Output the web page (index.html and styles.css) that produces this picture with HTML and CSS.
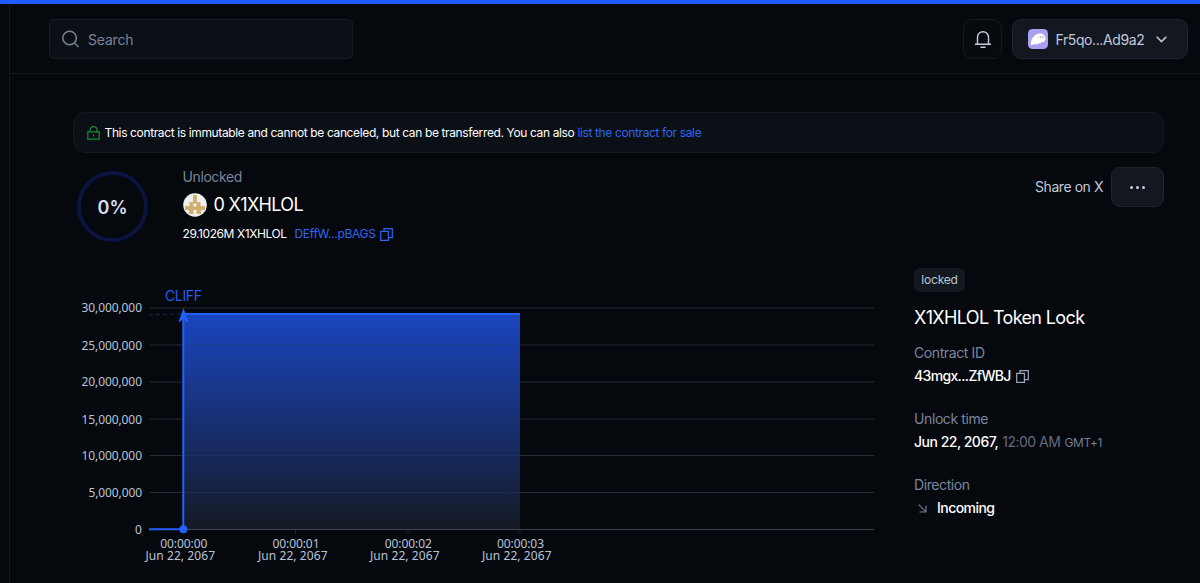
FILE: index.html
```html
<!DOCTYPE html>
<html lang="en">
<head>
<meta charset="utf-8">
<title>X1XHLOL Token Lock</title>
<link rel="stylesheet" href="styles.css">
</head>
<body>
<div class="accent-bar"></div>
<div class="shell">
  <aside class="rail"></aside>
  <div class="page">
    <header class="header">
      <div class="search">
        <svg width="18" height="18" viewBox="0 0 18 18" fill="none" stroke="#7b8292" stroke-width="1.5"><circle cx="7.600" cy="8" r="6.800"/><path d="M12.500 13l4 4"/></svg>
        <span>Search</span>
      </div>
      <div class="header-actions">
        <button class="icon-button" aria-label="Notifications">
          <svg width="18" height="20" viewBox="0 0 18 20" fill="none" stroke="#c3ccdc" stroke-width="1.4"><path d="M3.500 15V8.200a5.500 5.500 0 0 1 11 0V15M1 15.200h16M6.500 18.300h5"/></svg>
        </button>
        <button class="wallet">
          <svg width="20" height="20" viewBox="0 0 20 20"><rect width="20" height="20" rx="4.500" fill="#ab9ff2"/><path d="M2.700 14.400C3.300 9 7 4.500 12 4.500c3.400 0 5.500 2.100 5.500 4.900 0 2.700-1.900 4.300-3.800 3.600-.8 1.700-2.500 2.100-3.400 1-1.200 1.700-3 2-3.900.8-1.100 1.600-3.900 1.700-3.700-.4Z" fill="#fff"/><ellipse cx="12.300" cy="8" rx=".7" ry="1.100" fill="#ab9ff2"/><ellipse cx="15" cy="8" rx=".7" ry="1.100" fill="#ab9ff2"/></svg>
          <span>Fr5qo...Ad9a2</span>
          <svg class="chevron" width="11" height="7" viewBox="0 0 11 7" fill="none" stroke="#c3ccdc" stroke-width="1.500"><path d="M.7.8l4.800 4.800L10.300.8"/></svg>
        </button>
      </div>
    </header>
    <main class="main">
      <div class="notice">
        <svg width="13" height="14" viewBox="0 0 13 14" fill="none" stroke="#129136" stroke-width="1.200"><path d="M.8 5.800h11.400v7.400H.8zM3 5.800V4.200a3.500 3.500 0 0 1 7 0v1.600M6.500 8.500v2"/></svg>
        <p><span>This contract is immutable and cannot be canceled, but can be transferred. You can also</span> <a class="link">list the contract for sale</a></p>
      </div>
      <section class="summary">
        <div class="ring"><span>0%</span></div>
        <div class="amounts">
          <div class="label">Unlocked</div>
          <div class="token">
            <svg width="24" height="24" viewBox="0 0 24 24"><circle cx="12" cy="12" r="11.800" fill="#efefef"/><path d="M10 2h4v7h3.500v4H22v4h-4v4h-4.500v-4h-3v4H6v-4H2v-4h4.500V9H10zM10.500 10.500v3h3v-3z" fill="#d1b172" fill-rule="evenodd"/></svg>
            <span>0 X1XHLOL</span>
          </div>
          <div class="total">
            <span class="total-value">29.1026M X1XHLOL</span>
            <a class="link mint">DEffW...pBAGS</a>
            <svg width="13" height="13" viewBox="0 0 13 13" fill="none" stroke="#2f66f0" stroke-width="1.200"><path d="M.7 3.300h7.700v9H.7zM4 3V.7h8.300v9H8.700"/></svg>
          </div>
        </div>
        <div class="actions">
          <span class="share">Share on X</span>
          <button class="more" aria-label="More"><i></i><i></i><i></i></button>
        </div>
      </section>
      <section class="content">
        <svg class="chart" width="810" height="305" viewBox="73 265 810 305">
          <defs>
            <linearGradient id="area" x1="0" y1="0" x2="0" y2="1"><stop offset="0" stop-color="#1a45c0"/><stop offset="1" stop-color="#151a24"/></linearGradient>
          </defs>
          <g class="grid">
            <path d="M150 308H874M150 345H874M150 382H874M150 419H874M150 455.500H874M150 492.500H874"/>
          </g>
          <rect x="183" y="314" width="337" height="215.500" fill="url(#area)"/>
          <path class="grid-over" d="M183 345H520M183 382H520M183 419H520M183 455.500H520M183 492.500H520"/>
          <path class="axis" d="M150 529.500H874"/>
          <path class="ticks" d="M295.500 530v4M408 530v4M520 530v4"/>
          <path class="guide" d="M149 315L183 314"/>
          <path class="series" d="M149 529.200H183.300V314H520"/>
          <circle cx="183.300" cy="529.300" r="4" fill="#2460ff"/>
          <path d="M183.500 308l5.200 14.500-5.200-3.300-5.200 3.300z" fill="#2460ff"/>
          <text class="cliff" x="165" y="301.300" textLength="37">CLIFF</text>
          <g class="y-labels">
            <text x="81.500" y="312.300" textLength="60.500">30,000,000</text>
            <text x="81.500" y="349.500" textLength="60.500">25,000,000</text>
            <text x="81.500" y="386.300" textLength="60.500">20,000,000</text>
            <text x="81.500" y="423.500" textLength="60.500">15,000,000</text>
            <text x="81.500" y="460.300" textLength="60.500">10,000,000</text>
            <text x="88.500" y="497.300" textLength="53.500">5,000,000</text>
            <text x="135" y="534">0</text>
          </g>
          <g class="x-labels">
            <text x="160.300" y="548.300" textLength="47">00:00:00</text><text x="145.500" y="560" textLength="69.500">Jun 22, 2067</text>
            <text x="272.500" y="548.300" textLength="47">00:00:01</text><text x="258" y="560" textLength="69.500">Jun 22, 2067</text>
            <text x="384.800" y="548.300" textLength="47">00:00:02</text><text x="370" y="560" textLength="69.500">Jun 22, 2067</text>
            <text x="497" y="548.300" textLength="47">00:00:03</text><text x="482" y="560" textLength="69.500">Jun 22, 2067</text>
          </g>
        </svg>
        <aside class="details">
          <span class="tag">locked</span>
          <h1 class="title">X1XHLOL Token Lock</h1>
          <div class="field">
            <div class="label">Contract ID</div>
            <div class="value"><span class="contract-id">43mgx...ZfWBJ</span>
              <svg class="copy" width="13" height="13" viewBox="0 0 13 13" fill="none" stroke="#9ea7ba" stroke-width="1.200"><path d="M.7 3.300h7.700v9H.7zM4 3V.7h8.300v9H8.700"/></svg>
            </div>
          </div>
          <div class="field">
            <div class="label">Unlock time</div>
            <div class="value"><span class="date">Jun 22, 2067,</span><span class="time">12:00 AM</span><span class="zone">GMT+1</span></div>
          </div>
          <div class="field">
            <div class="label">Direction</div>
            <div class="value direction">
              <svg width="9" height="9" viewBox="0 0 9 9" fill="none" stroke="#70798b" stroke-width="1.200"><path d="M.7.7l7 7M8 1.500V8H1.500"/></svg>
              <span>Incoming</span>
            </div>
          </div>
        </aside>
      </section>
    </main>
  </div>
</div>
</body>
</html>
```

FILE: styles.css
```css
* { box-sizing: border-box; }
body {
  margin: 0;
  height: 583px;
  overflow: hidden;
  background: #05080d;
  color: #fff;
  font: 14px/20px Inter, "Liberation Sans", sans-serif;
  letter-spacing: -0.4px;
  white-space: nowrap;
}
button { font: inherit; letter-spacing: inherit; padding: 0; margin: 0; }
svg { display: block; flex: none; }
p, h1 { margin: 0; font-weight: 400; }
.accent-bar { height: 4px; background: #205bff; }
.shell { display: flex; height: 579px; }
.rail { width: 10px; border-right: 1px solid #12161e; flex: none; }
.page { flex: 1; min-width: 0; }
.header {
  height: 70px;
  padding: 0 12px 0 39px;
  display: flex;
  align-items: center;
  justify-content: space-between;
  border-bottom: 1px solid #151a22;
}
.search {
  width: 304px;
  height: 40px;
  padding-left: 12px;
  display: flex;
  align-items: center;
  gap: 8px;
  background: #0b0f16;
  border: 1px solid #171b23;
  border-radius: 5px;
  color: #7a849b;
}
.search span { padding-top: 2px; letter-spacing: -0.2px; }
.header-actions { display: flex; gap: 10px; }
.icon-button {
  width: 39px;
  height: 40px;
  display: grid;
  place-items: center;
  background: #070b10;
  border: 1px solid #151a21;
  border-radius: 9px;
}
.wallet {
  width: 176px;
  height: 40px;
  padding: 0 20px 0 15px;
  display: flex;
  align-items: center;
  background: #131720;
  border: 1px solid #1e232d;
  border-radius: 9px;
  color: #c0c9db;
}
.wallet span { margin-left: 7.5px; padding-top: 2px; }
.chevron { margin: 2px 0 0 auto; }
.main { padding: 38px 36px 0 63px; }
.notice {
  height: 41px;
  padding-left: 13px;
  display: flex;
  align-items: center;
  gap: 4.5px;
  background: #0b0f16;
  border: 1px solid #151a22;
  border-radius: 12px;
  font-size: 12px;
  letter-spacing: -0.37px;
}
.notice p { display: flex; gap: 3px; }
.link { color: #2f66f0; }
.summary { height: 112px; display: flex; }
.ring {
  width: 71px;
  height: 71px;
  margin: 18px 0 0 4px;
  display: grid;
  place-items: center;
  border: 4px solid #0b1340;
  border-radius: 50%;
  color: #d9def0;
  font-size: 18px;
  font-weight: 600;
  letter-spacing: 0;
}
.ring span { padding-top: 2px; }
.amounts { margin: 14px 0 0 34.5px; }
.label { color: #7b859d; }
.token {
  height: 24px;
  margin-top: 6px;
  display: flex;
  align-items: center;
  gap: 7px;
  font-size: 18px;
  letter-spacing: -0.65px;
}
.total {
  margin-top: 7px;
  display: flex;
  align-items: center;
  font-size: 12px;
}
.total-value { letter-spacing: -0.43px; }
.mint { margin: 0 4px 0 8px; letter-spacing: -0.3px; }
.actions { margin: 14px 0 0 auto; display: flex; align-items: center; gap: 8px; height: 40px; }
.share { color: #c0cada; letter-spacing: -0.45px; }
.more {
  width: 53px;
  height: 40px;
  display: flex;
  justify-content: center;
  align-items: center;
  gap: 3px;
  background: #131720;
  border: 1px solid #1e232d;
  border-radius: 9px;
}
.more i { width: 3px; height: 3px; border-radius: 50%; background: #c5cddd; }
.content { display: flex; }
.chart { letter-spacing: 0; }
.grid, .grid-over { stroke: #252b37; stroke-width: 1; }
.grid-over { stroke: #2b3b6a; stroke-opacity: 0.35; }
.axis { stroke: #3d4450; fill: none; }
.ticks { stroke: #1b2029; fill: none; }
.guide { stroke: #172554; stroke-width: 1; stroke-dasharray: 4 3; }
.series { fill: none; stroke: #2460ff; stroke-width: 2; }
.cliff { fill: #2859ee; font: 14px Inter, sans-serif; }
.y-labels, .x-labels { fill: #b9c4d6; font: 12px "Noto Sans", "Open Sans", sans-serif; }
.details { margin: 3px 0 0 31px; }
.tag {
  display: block;
  width: 51px;
  height: 24px;
  background: #131720;
  border-radius: 6px;
  color: #bcc7d8;
  font-size: 12px;
  letter-spacing: -0.2px;
  line-height: 24px;
  text-align: center;
}
.title { margin: 12px 0 11px; font-size: 18px; line-height: 28px; letter-spacing: -0.63px; }
.field { height: 66px; }
.value { margin-top: 3px; display: flex; align-items: center; height: 20px; font-weight: 500; }
.contract-id { letter-spacing: -0.65px; }
.date, .time { letter-spacing: -0.5px; }
.copy { margin-left: 5.5px; }
.time { margin-left: 4px; color: #626b7f; font-weight: 400; }
.zone { margin-left: 4px; padding-top: 1px; color: #737d94; font-size: 12px; font-weight: 400; letter-spacing: -0.35px; }
.direction { padding-left: 4px; gap: 10px; letter-spacing: -0.55px; }
```
